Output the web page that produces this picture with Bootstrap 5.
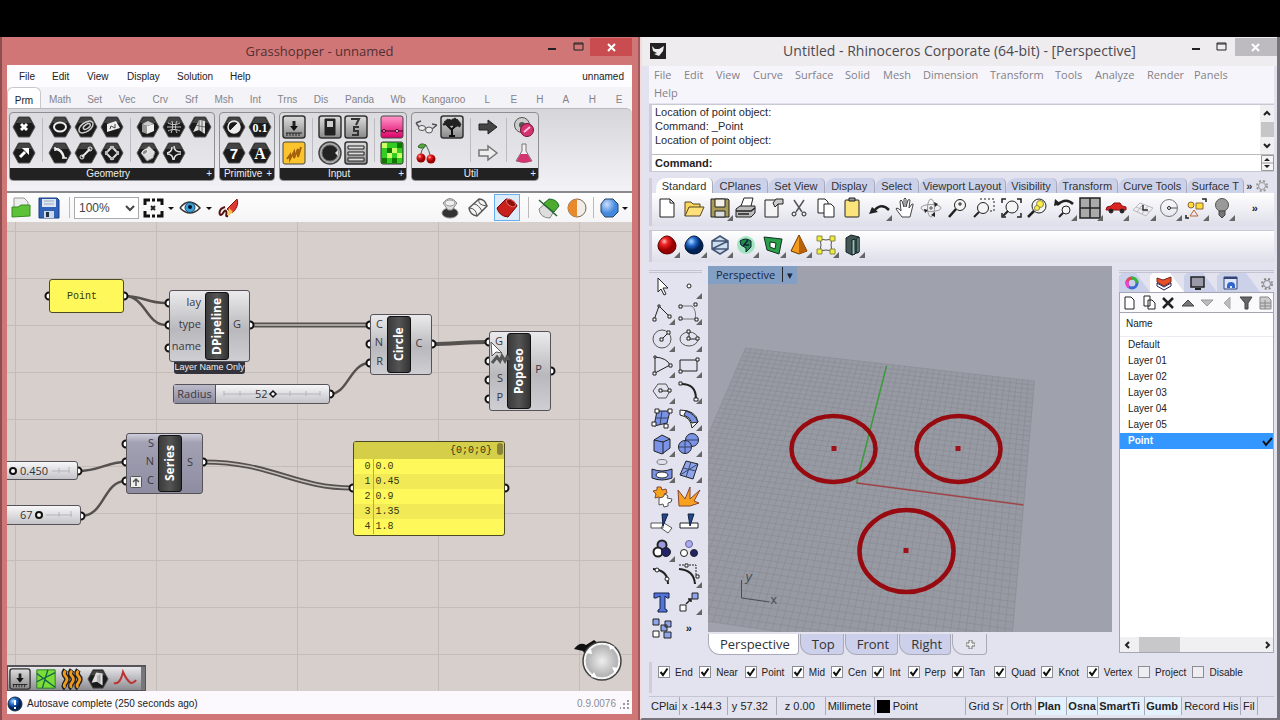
<!DOCTYPE html>
<html lang="en">
<head>
<meta charset="utf-8">
<meta name="viewport" content="width=device-width, initial-scale=1">
<title>Grasshopper and Rhinoceros</title>
<link href="https://cdn.jsdelivr.net/npm/bootstrap@5.3.0/dist/css/bootstrap.min.css" rel="stylesheet">
<style>
:root{--ui:"Liberation Sans",Arial,sans-serif;--segoe:"Open Sans","Noto Sans",sans-serif}
body{font-family:var(--ui);font-size:11px;line-height:14px;color:#222;background:#000}
button{border:0;padding:0;background:none;color:inherit;font:inherit}
a{color:inherit;text-decoration:none}
svg{display:block;fill:none;stroke:#222;flex:none}
.ico{width:24px;height:24px}
.desk{padding-top:37px}
.win-title{height:29px;font-family:var(--segoe);font-size:14px;line-height:28px}
.win-ctl{position:absolute;right:0;top:1px}
.win-ctl button{height:18px;width:26px}
.win-ctl .shut{width:42px}

/* Grasshopper */
.gh{background:#d17676;border-left:2px solid #8c4f50;border-right:2px solid #a05a5c;padding:0 6px 6px 5px}
.gh .win-title{color:#503033;height:28px;font-size:13px}
.gh .shut{background:#c94c50}
.gh-body{background:#f4f3f7}
.gh-menu{display:grid;grid-template-columns:33px 35px 40px 50px 53px 1fr auto;padding:0 8px 0 12px;height:22px;line-height:23px;background:#fdfcfe;font-size:10px}
.gh-tabs{display:grid;grid-template-columns:34fr 38fr 31fr 34fr 32fr 30fr 35fr 28fr 36fr 31fr 46fr 31fr 60fr 27fr 26fr 26fr 26fr 27fr 26fr;height:21px;line-height:25px;text-align:center;color:#85838a;font-size:10px}
.gh-tabs .on{background:#fff;color:#222;border:1px solid #c9c7cc;border-bottom:0;border-radius:6px 6px 0 0;line-height:19px}
.ribbon{height:83px;background:linear-gradient(#d6d5d9,#f3f2f6);border-top:1px solid #bbb9be;border-radius:0 6px 0 0;padding:3px 2px 0;gap:4px}
.rgroup{border:1px solid #8f8e92;border-radius:4px;height:69px;background:linear-gradient(#dcdbdf,#e9e8ec);overflow:hidden}
.rgroup .tools{padding:1px 1px 2px;height:55px}
.rcol{width:26px;display:grid;grid-auto-rows:26px;place-items:center}
.rsep{width:10px;display:flex;justify-content:center}
.rsep::before{content:"";width:1px;background:#bcbbc0;margin:4px 0}
.rgroup .cap{background:#222;color:#eee;height:13px;line-height:12px;font-size:10px;text-align:center;padding-right:2px}
.gh-bar{height:31px;border-top:2px solid #8a898e;background:linear-gradient(#fefefe,#f5f4f6);padding:0 4px 0 2px}
.gh-bar .vr{background:#bbb;opacity:1}
.zoomsel{width:65px;height:22px;border:1px solid #a9a8ad;background:#fff;font-size:12px;padding:0;color:#444;border-radius:0}
.picked{border:1px solid #6aaef0;background:#dcecfb;width:26px;height:27px}
.canvas{flex:1 1 469px;position:relative;overflow:hidden;background-color:#d7cfcb;background-image:linear-gradient(90deg,#c4bcb8 1px,transparent 1px),linear-gradient(#c4bcb8 1px,transparent 1px);background-size:141px 141px,47px 47px;background-position:8px 0,0 9px}
.wires{position:absolute;left:0;top:0}
.node{position:absolute;border:1px solid #55525a;border-radius:3px;background:linear-gradient(#ebeaec,#b9b8bc 55%,#cfced2);font-family:var(--segoe);font-size:11px;line-height:12px;color:#3a3842;display:flex}
.node .ins,.node .outs{display:flex;flex-direction:column;justify-content:space-around;flex:1;text-align:right;padding-bottom:4px}
.node .outs{text-align:center}
.node .narrow{flex:0 0 20px}
.spine{width:24px;margin:1px 0;border-radius:3px;border:1px solid #111;background:linear-gradient(90deg,#333,#555 50%,#3a3a3a);color:#fff;font-weight:700;font-size:12px;line-height:21px;writing-mode:vertical-rl;transform:rotate(180deg);text-align:center}
.note{position:absolute;border:1px solid #4b4a20;border-radius:3px;background:#fff85a;font-family:"Liberation Mono",monospace;font-size:10px;color:#333a10;overflow:hidden}
.track{background:linear-gradient(#f7f7f8,#c4c3c8);line-height:17px;align-items:center}
.n-point{left:42px;top:57px;width:75px;height:34px;line-height:34px;padding-left:17px}
.n-pipe{left:162px;top:68px;width:81px;height:72px}
.n-tag{left:167px;top:139px;width:71px;height:13px;background:#33323a;color:#eee;font-size:9px;line-height:12px;text-align:center;position:absolute;border-radius:0 0 3px 3px;white-space:nowrap}
.n-rad{left:166px;top:162px;width:157px;height:20px}
.n-rad b{font-weight:400;width:42px;height:100%;background:linear-gradient(#bdbccb,#8d8c9f);border-right:1px solid #55525a;text-align:center}
.n-circ{left:363px;top:92px;width:62px;height:61px}
.n-pop{left:482px;top:109px;width:62px;height:80px}
.n-pop .outs{flex:0 0 19px}
.n-ser{left:119px;top:211px;width:77px;height:61px;background:linear-gradient(#cfcedb,#a3a2b4 14%,#8d8ca1)}
.n-450{left:-4px;top:239px;width:75px;height:19px}
.n-67{left:-4px;top:283px;width:78px;height:20px}
.n-list{left:346px;top:219px;width:152px;height:95px}
.n-list table{width:100%;line-height:15px}
.n-list th,.n-list td{padding:0;font-weight:400;white-space:pre}
.n-list th{background:#d4ce48;height:17px;text-align:right}
.n-list th:last-child{padding-right:12px}
.n-list td:first-child{width:19px;text-align:right;border-right:1px solid #b5b03e;padding-right:2px}
.n-list td:last-child{padding-left:2px}
.n-list tr:nth-child(even) td{background:#f1e955}
.n-list .thumb{position:absolute;right:1px;top:1px;width:6px;height:12px;border-radius:3px;background:#88843a}
.cursor{position:absolute;left:482px;top:118px}
.opt{position:absolute;left:3px;top:42px}
.dock{position:absolute;left:0;bottom:0;width:139px;height:26px;border:1px solid #55545a;border-top-width:2px;background:linear-gradient(#e8e7ea,#8d8c91);padding-left:1px}
.dock .grab{width:6px;background:#77767b;height:100%;margin-left:4px}
.compass{position:absolute;right:8px;bottom:9px}
.gh-stat{height:23px;background:#fbf9fd;padding:2px 2px 0 0;font-size:10px}
.gh-stat .ver{color:#8d8b91}

/* Rhino */
.rh{background:#e3e3ef;border-left:2px solid #f0dcdc;border-right:3px solid #77747b;border-bottom:2px solid #77747b;padding:0 3px 4px 7px}
.rh .win-title{color:#4b494e;background:#efecf0;margin:0 -3px 0 -7px}
.rh .shut{background:#bdbbbf}
.rh .app{position:absolute;left:8px;top:6px}
.rh-menu{display:grid;grid-template-columns:30px 32px 37px 42px 50px 38px 40px 67px 65px 40px 52px 47px 1fr;grid-auto-rows:18px;line-height:18px;background:#f7f5fc;color:#838187;font-family:var(--segoe);font-size:11px;height:37px;padding-left:5px}
.grip{border-left:3px solid #cdcddb}
.cmd{margin-top:1px;height:68px;background:#fff;border-top:1px solid #c9c9d4;border-bottom:1px solid #c9c9d4}
.hist{height:49px;padding:0 3px;line-height:14px;color:#2b2930}
.prompt{border-top:1px solid #bbb;font-weight:700;padding-left:3px}
.prompt input{border:0;outline:0;min-width:0;font-weight:400;padding:0}
.sb-v{width:14px;background:#f0f0f3}
.sb-v i{background:#c6c6c9;flex:1;width:13px}
.rh-tabs{height:15px;margin-top:6px;display:grid;grid-template-columns:58fr 56fr 57fr 51fr 45fr 88fr 52fr 62fr 70fr 58fr 10fr 20fr;line-height:16px;color:#333;padding-left:4px;border-left:3px solid #cdcddb}
.rh-tabs button{background:#ccd1ea;border-radius:10px 5px 0 0;white-space:nowrap;overflow:hidden;border-right:1px solid #aab;text-align:center}
.rh-tabs .on{background:#fff}
.rh-tabs .more{background:none;border:0;font-weight:700}
.tb{display:grid;grid-template-columns:repeat(22,26fr) 38fr;background:linear-gradient(#fff,#dedeea);place-items:center;height:33px;padding:0 0 3px 2px}
.tb + .tb{height:32px;margin-top:4px;border-top:1px solid #c9c9d4}
.fly{position:relative}
.fly::after{content:"";position:absolute;right:-1px;bottom:-1px;border:3px solid transparent;border-right-color:#666;border-bottom-color:#666}
.box{width:53px;margin:4px 6px -9px 0;display:grid;grid-template-columns:1fr 1fr;grid-auto-rows:1fr;place-items:center;border-top:3px double #c3c3d2}
.view{background:#9fa1ac;min-height:366px;position:relative}
.view>svg{width:100%;height:100%;position:absolute}
.view .lbl{position:absolute;left:0;top:0;background:#83a0c4;height:18px;line-height:18px;font-family:var(--segoe);font-size:11px;color:#172541;padding:0 4px 0 8px;z-index:1}
.panel{width:155px;margin-left:7px;border-top:3px double #c3c3d2}
.ptabs{display:grid;grid-template-columns:31px 34px 33px 43px 1fr;height:19px}
.ptabs button{background:#ccd1ea;padding-left:5px;clip-path:polygon(0 3px,3px 0,calc(100% - 14px) 0,100% 100%,0 100%)}
.ptabs .on{background:#fff}
.ptabs .gear{background:none;padding:0;clip-path:none}
.ptools{display:flex;justify-content:space-between;align-items:center;background:#fafafd;border:1px solid #a5a5b3;height:21px;padding:0 1px}
.players{flex:1;background:#fff;border:1px solid #a5a5b3;border-top:0}
.players table{width:100%;font-size:10px}
.players th{font-weight:400;height:23px;border-bottom:1px solid #ececf2;padding:0 6px}
.players td{height:16px;padding:0 8px;line-height:16px}
.players .sel td{background:#3397ff;color:#fff;font-weight:700;padding-right:0}
.sb-h{height:15px;background:#f0f0f3}
.sb-h i{width:41px;background:#c8c8cb;height:15px;margin-left:5px}
.vtabs{height:23px;font-family:var(--segoe);font-size:13px;line-height:21px;margin:2px 0 0 59px;color:#333;gap:1px}
.vtabs button{background:#ccd0ea;border:1px solid #a9a9b8;border-top:0;border-radius:0 0 4px 12px;padding:0 8px 0 11px;height:21px}
.vtabs .on{background:#fff}
.vtabs .plus{background:none;padding:0 11px 0 13px}
.snaps{display:grid;grid-template-columns:41fr 45fr 47fr 39fr 41fr 35fr 44fr 42fr 47fr 45fr 51fr 54fr 81fr;margin-top:5px;height:31px;padding:4px 0 0 6px;font-size:10px}
.snaps label{display:flex;align-items:flex-start;gap:5px;white-space:nowrap;line-height:13px;height:13px}
.snaps input{appearance:none;margin:0;width:12px;height:12px;border:1px solid #8c8c95;background:#ededf2;flex:none}
.snaps input:checked{background:#fff url("data:image/svg+xml,%3Csvg xmlns='http://www.w3.org/2000/svg' viewBox='0 0 10 10'%3E%3Cpath d='M1.500 5l2.500 3L8.500 1.500' fill='none' stroke='%23111' stroke-width='2'/%3E%3C/svg%3E") center/10px}
.rstat{display:grid;grid-template-columns:31fr 48fr 49fr 49fr 49fr 92fr 42fr 28fr 31fr 31fr 47fr 37fr 59fr 17fr 16fr;margin-top:3px;border-top:1px solid #c5c5d3;height:18px;line-height:18px;font-size:11px}
.rstat>*{white-space:nowrap;border-right:1px solid #aaaabb;padding-left:2px;text-align:left;min-width:0}
.rstat>:last-child{border:0}
.rstat .act{background:#e3f1fc;font-weight:700;padding-left:1px}
.swatch{display:inline-block;width:13px;height:13px;background:#000;vertical-align:-3px;margin-right:3px}
</style>
</head>
<body>
<svg width="0" height="0" class="position-absolute" aria-hidden="true">
<defs>
<linearGradient id="gTile" x1="0" y1="0" x2="0" y2="1"><stop offset="0" stop-color="#ddd"/><stop offset="1" stop-color="#888"/></linearGradient>
<radialGradient id="gRed" cx=".35" cy=".3"><stop offset="0" stop-color="#fbb"/><stop offset=".4" stop-color="#e22"/><stop offset="1" stop-color="#900"/></radialGradient>
<radialGradient id="gBlue" cx=".35" cy=".3"><stop offset="0" stop-color="#adf"/><stop offset=".5" stop-color="#26c"/><stop offset="1" stop-color="#025"/></radialGradient>
<radialGradient id="gSky" cx=".35" cy=".3"><stop offset="0" stop-color="#cdf"/><stop offset="1" stop-color="#48d"/></radialGradient>
<radialGradient id="gGrey"><stop offset="0" stop-color="#eee"/><stop offset="1" stop-color="#b0b0b2"/></radialGradient>
<linearGradient id="gPink" x1="0" y1="0" x2="0" y2="1"><stop offset="0" stop-color="#f9c"/><stop offset="1" stop-color="#d06"/></linearGradient>
<symbol id="hex" viewBox="0 0 24 24"><path d="M6.500 2h11L23 12l-5.500 10h-11L1 12z" fill="#1b1b1b" stroke="#555"/><path d="M7 3h10l3 5H4z" fill="#444" stroke="none"/></symbol>
<symbol id="tile" viewBox="0 0 24 24"><rect x="1" y="1" width="22" height="22" rx="2.500" fill="url(#gTile)" stroke="#333" stroke-width="1.500"/></symbol>
</defs></svg>

<main class="desk d-flex min-vh-100">

<section class="gh w-50 d-flex flex-column" aria-label="Grasshopper">
<header class="win-title position-relative text-center">Grasshopper - unnamed
<div class="win-ctl d-flex">
<button aria-label="Minimise"><svg width="26" height="18" stroke-width="2"><path d="M10 11h8"/></svg></button>
<button aria-label="Maximise"><svg width="26" height="18"><path d="M10 5h9v7h-9z M10 6h9"/></svg></button>
<button class="shut" aria-label="Close"><svg width="42" height="18" stroke-width="2"><path d="M18 6l7 7M25 6l-7 7" stroke="#fff"/></svg></button>
</div></header>
<div class="gh-body flex-grow-1 d-flex flex-column">
<nav class="gh-menu"><a href="#">File</a><a href="#">Edit</a><a href="#">View</a><a href="#">Display</a><a href="#">Solution</a><a href="#">Help</a><span>unnamed</span></nav>
<div class="gh-tabs"><button class="on">Prm</button><button>Math</button><button>Set</button><button>Vec</button><button>Crv</button><button>Srf</button><button>Msh</button><button>Int</button><button>Trns</button><button>Dis</button><button>Panda</button><button>Wb</button><button>Kangaroo</button><button>L</button><button>E</button><button>H</button><button>A</button><button>H</button><button>E</button></div>

<div class="ribbon d-flex align-items-start">
<div class="rgroup"><div class="tools d-flex">
<div class="rcol">
<button aria-label="Point"><svg class="ico" viewBox="0 0 24 24"><use href="#hex"/><path d="M9 9l6 6M15 9l-6 6" stroke="#fff" stroke-width="3"/></svg></button>
<button aria-label="Vector"><svg class="ico" viewBox="0 0 24 24"><use href="#hex"/><path d="M8 16l5-5" stroke="#fff" stroke-width="3"/><path d="M10 7h7v7z" fill="#fff" stroke="none"/></svg></button></div>
<div class="rsep"></div>
<div class="rcol">
<button aria-label="Circle"><svg class="ico" viewBox="0 0 24 24"><use href="#hex"/><ellipse cx="12" cy="12" rx="6" ry="4.500" stroke="#eee" stroke-width="2"/></svg></button>
<button aria-label="Arc"><svg class="ico" viewBox="0 0 24 24"><use href="#hex"/><path d="M7 8q7 0 9 9" stroke="#eee" stroke-width="2.500"/><path d="M7 6v4M14 17h5" stroke="#eee" stroke-width="1.500"/></svg></button></div>
<div class="rcol">
<button aria-label="Curve"><svg class="ico" viewBox="0 0 24 24"><use href="#hex"/><g transform="rotate(-35 12 12)" stroke="#ccc"><ellipse cx="12" cy="12" rx="8" ry="4.500" stroke-width="1.500"/><ellipse cx="13" cy="12" rx="4" ry="2" stroke-width="1.500"/></g></svg></button>
<button aria-label="Line"><svg class="ico" viewBox="0 0 24 24"><use href="#hex"/><path d="M8 16l8-8" stroke="#eee" stroke-width="2"/><circle cx="8" cy="16" r="2" stroke="#eee"/><circle cx="16" cy="8" r="2" stroke="#eee"/></svg></button></div>
<div class="rcol">
<button aria-label="Plane"><svg class="ico" viewBox="0 0 24 24"><use href="#hex"/><path d="M7 9l9-3 4 7-13 4z" fill="#eee" stroke="none"/><path d="M10 14l1-3 4 2 0-4" stroke="#444"/></svg></button>
<button aria-label="Rectangle"><svg class="ico" viewBox="0 0 24 24"><use href="#hex"/><path d="M12 6l6 6-6 6-6-6z" stroke="#ddd" stroke-width="2"/><path d="M10 5h4v3h-4zM10 16h4v3h-4zM5 10h3v4H5zM16 10h3v4h-3z" fill="#bbb" stroke="none"/></svg></button></div>
<div class="rsep"></div>
<div class="rcol">
<button aria-label="Box"><svg class="ico" viewBox="0 0 24 24"><use href="#hex"/><path d="M6 9l5 2v8l-5-2z" fill="#999" stroke="none"/><path d="M11 11l7-2v7l-7 3z" fill="#eee" stroke="none"/><path d="M6 9l6-3 6 3-7 2z" fill="#ccc" stroke="none"/></svg></button>
<button aria-label="Brep"><svg class="ico" viewBox="0 0 24 24"><use href="#hex"/><path d="M5 12l8-7 6 6-2 6-6 3z" fill="#ddd" stroke="#888"/><ellipse cx="9" cy="11" rx="3" ry="2" transform="rotate(-35 9 11)" fill="#888" stroke="#eee"/></svg></button></div>
<div class="rcol">
<button aria-label="Mesh"><svg class="ico" viewBox="0 0 24 24"><use href="#hex"/><path d="M5 12h14M6 8c4 2 8 2 12 0M6 16c4-2 8-2 12 0M10 6c1 4 1 8-1 12M15 6c-2 4-2 8 0 12" stroke="#ccc"/></svg></button>
<button aria-label="Twisted box"><svg class="ico" viewBox="0 0 24 24"><use href="#hex"/><path d="M12 5q0 6 7 6M19 13q-7 0-7 6M5 12q5-1 5-6M5 13q6 0 6 6" stroke="#ddd" stroke-width="1.500"/></svg></button></div>
<div class="rcol">
<button aria-label="Geometry"><svg class="ico" viewBox="0 0 24 24"><use href="#hex"/><path d="M11 5l6 1v13l-6-4-6 2z" fill="#ddd" stroke="none"/><path d="M11 5v10M8 10l3 1M17 12l-6-1M14 6v11" stroke="#666"/></svg></button></div>
</div><div class="cap d-flex"><span class="flex-grow-1">Geometry</span><span>+</span></div></div>

<div class="rgroup"><div class="tools d-flex">
<div class="rcol">
<button aria-label="Boolean"><svg class="ico" viewBox="0 0 24 24"><use href="#hex"/><circle cx="12" cy="12" r="6" stroke="#eee" stroke-width="1.500"/><path d="M16 8a5.500 5.500 0 0 1-8 8z" fill="#eee" stroke="#eee"/></svg></button>
<button aria-label="Integer"><svg class="ico" viewBox="0 0 24 24"><use href="#hex"/><text x="12" y="17.500" text-anchor="middle" font-size="15" font-weight="700" fill="#fff" stroke="none">7</text></svg></button></div>
<div class="rcol">
<button aria-label="Number"><svg class="ico" viewBox="0 0 24 24"><use href="#hex"/><text x="12" y="16.500" text-anchor="middle" font-size="12" font-weight="700" font-family="Liberation Serif" fill="#fff" stroke="none">0.1</text></svg></button>
<button aria-label="Text"><svg class="ico" viewBox="0 0 24 24"><use href="#hex"/><text x="12" y="17.500" text-anchor="middle" font-size="16" font-weight="700" font-family="Liberation Serif" fill="#fff" stroke="none">A</text></svg></button></div>
</div><div class="cap d-flex"><span class="flex-grow-1">Primitive</span><span>+</span></div></div>

<div class="rgroup"><div class="tools d-flex">
<div class="rcol">
<button aria-label="Number slider"><svg class="ico" viewBox="0 0 24 24"><use href="#tile"/><path d="M12 6v6" stroke-width="3"/><path d="M8 11h8l-4 5z" fill="#111" stroke="none"/><path d="M4 18h16M5 18v3M8 18v3M11 18v3M14 18v3M17 18v3"/></svg></button>
<button aria-label="Panel"><svg class="ico" viewBox="0 0 24 24"><rect x="1" y="1" width="22" height="22" rx="2" fill="#fcc42c" stroke="#444"/><path d="M5 18l3-4 0 4 4-7v6l4-9 0 8 3-10" stroke="#a4620a" stroke-width="2"/></svg></button></div>
<div class="rsep"></div>
<div class="rcol">
<button aria-label="Toggle"><svg class="ico" viewBox="0 0 24 24"><use href="#tile"/><path d="M7 4h10v16H7z" fill="#222"/><path d="M9 6h6v6H9z" fill="#ccc" stroke="none"/></svg></button>
<button aria-label="Knob"><svg class="ico" viewBox="0 0 24 24"><circle cx="12" cy="12" r="11" fill="#aaa" stroke="#444" stroke-width="1.500"/><circle cx="12" cy="12" r="8" fill="#222" stroke="#666"/><path d="M20 9v6l-3-3z" fill="#ddd" stroke="none"/></svg></button></div>
<div class="rcol">
<button aria-label="Digit scroller"><svg class="ico" viewBox="0 0 24 24"><use href="#tile"/><path d="M7 4h8l-3 6M15 12h-5v4h4v4H8" stroke="#333" stroke-width="2"/></svg></button>
<button aria-label="Value list"><svg class="ico" viewBox="0 0 24 24"><use href="#tile"/><path d="M4 5h16v3H4zM4 11h16v3H4zM4 17h16v3H4z" fill="#ddd"/></svg></button></div>
<div class="rsep"></div>
<div class="rcol">
<button aria-label="Gradient"><svg class="ico" viewBox="0 0 24 24"><rect x="1" y="1" width="22" height="22" rx="2" fill="url(#gPink)" stroke="#444"/><path d="M1 16h22" stroke="#402"/><circle cx="4" cy="16" r="1.500" fill="#f9c" stroke="#402"/><circle cx="17" cy="16" r="1.500" fill="#fff" stroke="#402"/></svg></button>
<button aria-label="Image sampler"><svg class="ico" viewBox="0 0 24 24"><rect x="1" y="1" width="22" height="22" rx="2" fill="#3c2" stroke="#333"/><path d="M2 2h5v5H2zM12 7h5v5h-5zM7 12h5v5H7zM17 12h5v5h-5z" fill="#cf6" stroke="none"/><path d="M7 7h5v5H7zM17 2h5v5h-5zM12 17h5v5h-5zM2 17h5v5H2z" fill="#170" stroke="none"/></svg></button></div>
</div><div class="cap d-flex"><span class="flex-grow-1">Input</span><span>+</span></div></div>

<div class="rgroup"><div class="tools d-flex">
<div class="rcol">
<button aria-label="Glasses"><svg class="ico" viewBox="0 0 24 24"><path d="M2 8l3 4M2 8l5-2M11 13l1 0M18 14l5-4M23 10l-5-1" stroke="#555" stroke-width="1.500"/><ellipse cx="8" cy="13" rx="3.500" ry="2.500" fill="#eee" stroke="#555"/><ellipse cx="15" cy="15" rx="3.500" ry="3" fill="#eee" stroke="#555"/></svg></button>
<button aria-label="Cherry picker"><svg class="ico" viewBox="0 0 24 24"><path d="M12 4q-5 4-6 12M12 4q3 5 5 13" stroke="#465"/><path d="M12 4Q6 1 4 6q5 3 8-2" fill="#5a3" stroke="#363"/><circle cx="7" cy="17" r="4.500" fill="url(#gRed)" stroke="none"/><circle cx="17" cy="18" r="4.500" fill="url(#gRed)" stroke="none"/></svg></button></div>
<div class="rcol">
<button aria-label="Data tree"><svg class="ico" viewBox="0 0 24 24"><use href="#tile"/><path d="M12 22v-9M12 15L6 9M12 14l6-5M9 21h6" stroke="#111" stroke-width="2"/><path d="M3 10l2-4 3-2 3 1 4-2 3 2 3 4-1 3-3-1-3 1-2-2-3 2-3-2z" fill="#222" stroke="#222" stroke-dasharray="2 1"/></svg></button></div>
<div class="rsep"></div>
<div class="rcol">
<button aria-label="Jump in"><svg class="ico" viewBox="0 0 24 24"><path d="M3 9h9V5l9 7-9 7v-4H3z" fill="#444" stroke="#222"/></svg></button>
<button aria-label="Jump out"><svg class="ico" viewBox="0 0 24 24"><path d="M3 9h9V5l9 7-9 7v-4H3z" fill="#eee" stroke="#777" stroke-width="1.500"/></svg></button></div>
<div class="rsep"></div>
<div class="rcol">
<button aria-label="Cluster"><svg class="ico" viewBox="0 0 24 24"><circle cx="10" cy="10" r="7.500" fill="#ccc" stroke="#555"/><circle cx="10" cy="10" r="3" fill="#555" stroke="none"/><circle cx="15" cy="15" r="6.500" fill="#d3336e" stroke="#713"/><path d="M12 17l6-5" stroke="#fbd" stroke-width="2"/></svg></button>
<button aria-label="Galapagos"><svg class="ico" viewBox="0 0 24 24"><path d="M10 3h4v7l6 10q-8 3-16 0l6-10z" fill="#f4eef2" stroke="#777"/><path d="M8.500 13h7l4 7q-7 3-15 0z" fill="#d3336e" stroke="none"/></svg></button></div>
</div><div class="cap d-flex"><span class="flex-grow-1">Util</span><span>+</span></div></div>
</div>

<div class="gh-bar d-flex align-items-center">
<button aria-label="Open"><svg class="ico" viewBox="0 0 24 24"><path d="M5 2h10l4 4v12H5z" fill="#eee" stroke="#999"/><path d="M3 21V11h6l3-2h9v11z" fill="#5ec238" stroke="#3a8a22"/></svg></button>
<button class="ms-1" aria-label="Save"><svg class="ico" viewBox="0 0 24 24"><path d="M2 2h18l2 2v18H2z" fill="#2f62b8" stroke="#1c4080"/><path d="M5 3h14v8H5z" fill="#dde6f2" stroke="none"/><path d="M7 5h10M7 8h10" stroke="#9ab"/><path d="M7 15h10v7H7z" fill="#cdd8e8" stroke="none"/><path d="M9 16h3v5H9z" fill="#234" stroke="none"/></svg></button>
<span class="vr ms-2 my-1"></span>
<select class="zoomsel ms-1" aria-label="Zoom"><option>100%</option></select>
<button class="ms-1" aria-label="Zoom extents"><svg width="32" height="24" viewBox="0 0 32 24"><path d="M2 9V4h5M14 4h5v5M19 15v5h-5M7 20H2v-5M9 4h3M9 20h3" stroke="#111" stroke-width="3"/><path d="M8 10l4 4M12 10l-4 4" stroke-width="2"/><path d="M25 11h6l-3 3z" fill="#111" stroke="none"/></svg></button>
<button class="ms-1" aria-label="Named views"><svg width="34" height="24" viewBox="0 0 34 24"><path d="M1 12q9-12 20 0-10 10-20 0" fill="#fff" stroke="#333" stroke-width="1.500"/><circle cx="11" cy="11.500" r="5" fill="#3aa0d8" stroke="#246"/><circle cx="11" cy="11" r="2" fill="#012" stroke="none"/><path d="M27 11h6l-3 3z" fill="#111" stroke="none"/></svg></button>
<button class="ms-1" aria-label="Sketch"><svg class="ico" viewBox="0 0 24 24"><path d="M20 3c2 5-1 11-5 14l-5-4z" fill="#e03a34" stroke="#811"/><path d="M12 12l4 4-5 4z" fill="#f5c13c" stroke="none"/><path d="M8 11c-7 2-6 8-4 8s3-6 5-4-2 6 2 5" stroke="#511" stroke-width="2"/></svg></button>
<span class="flex-grow-1"></span>
<button aria-label="No preview"><svg class="ico" viewBox="0 0 24 24"><ellipse cx="12" cy="17" rx="8" ry="5" fill="#333" stroke="#888"/><path d="M5 7q7-9 14 0l-5 7h-4z" fill="#ddd" stroke="#888"/><ellipse cx="12" cy="7" rx="5" ry="3" fill="#eee" stroke="#999"/></svg></button>
<button class="ms-1" aria-label="Wireframe preview"><svg class="ico" viewBox="0 0 24 24"><path d="M3 12L13 3q6 0 8 7L11 20q-7-1-8-8z" fill="#f4f4f4" stroke="#555" stroke-width="1.500"/><path d="M13 3q-2 6 8 7M3 12q7 0 8 8M8 8q4 0 8 7" stroke="#555"/></svg></button>
<button class="picked ms-1" aria-label="Shaded preview" aria-pressed="true"><svg class="ico" viewBox="0 0 24 24"><path d="M2 12L11 3q8 0 11 7l-9 11q-9-1-11-9z" fill="#c8201a" stroke="#700"/><ellipse cx="16" cy="7" rx="5" ry="3" transform="rotate(35 16 7)" fill="#8c0f0c" stroke="#e66"/></svg></button>
<span class="vr mx-2 my-1"></span>
<button aria-label="Preview selected"><svg class="ico" viewBox="0 0 24 24"><path d="M2 13l8-7 7 9-4 7q-10 0-11-9" fill="#ddd" stroke="#888"/><path d="M6 8l6-5q8 0 10 7l-5 6z" fill="#4caa2c" stroke="#263"/><path d="M2 4l18 16" stroke="#263" stroke-width="1.500"/></svg></button>
<button class="ms-1" aria-label="Document preview"><svg class="ico" viewBox="0 0 24 24"><circle cx="12" cy="12" r="9" fill="#f0ede8" stroke="#765"/><path d="M12 3a9 9 0 0 0 0 18z" fill="#e8892c" stroke="none"/></svg></button>
<span class="vr ms-1 my-1"></span>
<button class="ms-1" aria-label="Preview mesh"><svg width="30" height="24" viewBox="0 0 30 24"><path d="M7 3h8l5 5v8l-5 5H7l-4-5V8z" fill="url(#gSky)" stroke="#246"/><path d="M24 11h6l-3 3z" fill="#111" stroke="none"/></svg></button>
</div>

<div class="canvas">
<svg class="wires" width="624" height="470">
<g stroke="#55514f" stroke-width="2.500">
<path d="M117 74c20 0 22 7 42 7M117 74c22 0 22 29 42 29"/>
<path d="M323 172c18 0 20-31 40-31"/><path d="M71 249c22 0 28-9 48-9M74 294c24 0 22-35 45-35"/>
<path d="M425 122c20 0 35-2 57-2" stroke-width="4"/>
<path d="M243 103h120M196 240c70 0 90 26 150 26" stroke-width="5"/>
</g>
<path d="M243 103h120M196 240c70 0 90 26 150 26" stroke="#c5bebb" stroke-width="1.500"/>
<g fill="#fff" stroke="#111" stroke-width="2">
<circle cx="42" cy="74" r="3.500"/><circle cx="117" cy="74" r="3.500"/><circle cx="162" cy="81" r="3.500"/><circle cx="162" cy="103" r="3.500"/><circle cx="162" cy="126" r="3.500"/><circle cx="243" cy="103" r="3.500"/><circle cx="363" cy="103" r="3.500"/><circle cx="363" cy="122" r="3.500"/><circle cx="363" cy="141" r="3.500"/><circle cx="425" cy="122" r="3.500"/><circle cx="323" cy="172" r="3.500"/><circle cx="482" cy="120" r="3.500"/><circle cx="482" cy="139" r="3.500"/><circle cx="482" cy="158" r="3.500"/><circle cx="482" cy="177" r="3.500"/><circle cx="544" cy="149" r="3.500"/><circle cx="119" cy="222" r="3.500"/><circle cx="119" cy="240" r="3.500"/><circle cx="119" cy="259" r="3.500"/><circle cx="196" cy="240" r="3.500"/><circle cx="71" cy="249" r="3.500"/><circle cx="74" cy="294" r="3.500"/><circle cx="346" cy="266" r="3.500"/><circle cx="498" cy="266" r="3.500"/>
</g></svg>
<div class="note n-point">Point</div>
<div class="n-tag">Layer Name Only</div>
<div class="node n-pipe"><div class="ins pe-1"><span>lay</span><span>type</span><span>name</span></div><div class="spine">DPipeline</div><div class="outs narrow pe-1"><span>G</span></div></div>
<div class="node track n-rad"><b>Radius</b><svg width="112" height="18"><path d="M8 9h96M8 6v5M24 6v5M74 6v5M90 6v5M104 6v5" stroke="#b5b4ba"/><text x="39" y="13" fill="#333" stroke="none">52</text><path d="M57 6l3 3-3 3-3-3z" fill="#fff" stroke="#111" stroke-width="1.500"/></svg></div>
<div class="node n-circ"><div class="ins pe-1"><span>C</span><span>N</span><span>R</span></div><div class="spine">Circle</div><div class="outs narrow pe-1"><span>C</span></div></div>
<div class="node n-pop"><div class="ins pe-1"><span>G</span><span>&nbsp;</span><span>S</span><span>P</span></div><div class="spine">PopGeo</div><div class="outs pe-1"><span>P</span></div></div>
<svg class="cursor" width="24" height="28" aria-hidden="true"><path d="M2 2l1 14 4-4 6 1z" fill="#fff" stroke="#555"/><path d="M3 23l5-6 3 4 2-5 3 5 2-4 2 3" stroke="#555" stroke-width="3"/></svg>
<div class="node n-ser"><div class="ins pe-1"><span>S</span><span>N</span><span>C</span></div><div class="spine">Series</div><div class="outs narrow pe-1"><span>S</span></div>
<svg class="opt" width="12" height="12"><rect x=".5" y=".5" width="11" height="11" rx="1" fill="#eee" stroke="#555"/><path d="M6 10V4M3 6l3-3 3 3" stroke="#555" stroke-width="1.500"/></svg></div>
<div class="node track n-450"><svg width="74" height="17"><path d="M48 9h18M55 6v5M65 5v6" stroke="#b5b4ba"/><circle cx="9" cy="9" r="3" fill="#fff" stroke="#111" stroke-width="2"/><text x="16" y="13" fill="#333" stroke="none">0.450</text></svg></div>
<div class="node track n-67"><svg width="76" height="18"><path d="M42 9h26M55 6v5M67 5v6" stroke="#b5b4ba"/><text x="16" y="13" fill="#333" stroke="none">67</text><circle cx="35" cy="9" r="3" fill="#fff" stroke="#111" stroke-width="2"/></svg></div>
<div class="note n-list"><table><thead><tr><th></th><th>{0;0;0}</th></tr></thead><tbody><tr><td>0</td><td>0.0</td></tr><tr><td>1</td><td>0.45</td></tr><tr><td>2</td><td>0.9</td></tr><tr><td>3</td><td>1.35</td></tr><tr><td>4</td><td>1.8</td></tr></tbody></table><span class="thumb"></span></div>

<div class="dock d-flex align-items-center gap-1">
<button aria-label="Slider"><svg width="22" height="22" viewBox="0 0 24 24"><use href="#tile"/><path d="M12 6v6" stroke-width="3"/><path d="M8 11h8l-4 5z" fill="#111" stroke="none"/><path d="M4 18h16M5 18v3M8 18v3M11 18v3M14 18v3M17 18v3"/></svg></button>
<button aria-label="Graph mapper"><svg width="22" height="22" viewBox="0 0 24 24"><path d="M2 2h20v20H2z" fill="#7ddc3a" stroke="#272"/><path d="M2 15L22 5M14 2L8 22M2 6l8 6M11 13l11 8" stroke="#164" stroke-width="1.500"/></svg></button>
<button aria-label="Flow"><svg width="22" height="22" viewBox="0 0 24 24"><path d="M5 2q-3 4 0 7t0 7 0 6M12 2q-3 4 0 7t0 7 0 6M19 2q-3 4 0 7t0 7 0 6" stroke="#222" stroke-width="6"/><path d="M5 3q-3 3 0 6t0 7 0 5M12 3q-3 3 0 6t0 7 0 5M19 3q-3 3 0 6t0 7 0 5" stroke="#f39a1c" stroke-width="3"/></svg></button>
<button aria-label="Geometry"><svg width="22" height="22" viewBox="0 0 24 24"><use href="#hex"/><path d="M10 5l7 1v13l-6-4-6 1z" fill="#ddd" stroke="none"/><path d="M12 8v7M14 7v9" stroke="#888"/></svg></button>
<button aria-label="Quick graph"><svg width="24" height="22" viewBox="0 0 24 22"><path d="M1 15q6 2 9-11 4 9 8 11 3 0 5-3" stroke="#b33" stroke-width="2"/></svg></button>
<span class="grab ms-auto"></span></div>
<svg class="compass" width="52" height="46"><path d="M2 13q6-8 12-4l8-5 4 3-12 14-3-6z" fill="#111" stroke="none"/><circle cx="30" cy="25" r="19" fill="#f6f6f6" stroke="#444" stroke-width="1.500"/><circle cx="30" cy="25" r="16" fill="url(#gGrey)" stroke="#bbb"/><path d="M14 17l5-4 1 5zM37 8l6 3-5 3zM46 32l-6-1 3 7zM19 41l3-5 3 6z" fill="#fff" stroke="none"/></svg>
</div>
<footer class="gh-stat d-flex align-items-center"><svg width="16" height="16" viewBox="0 0 16 16" class="me-1"><circle cx="8" cy="8" r="7" fill="url(#gBlue)" stroke="#134"/><path d="M8 4v5M8 11v2" stroke="#fff" stroke-width="2"/></svg><span class="flex-grow-1">Autosave complete (250 seconds ago)</span><span class="ver me-1">0.9.0076</span><svg width="10" height="10"><path d="M8 1v2M4 4v2M8 4v2M0 8v2M4 8v2M8 8v2" stroke="#999" stroke-width="2"/></svg></footer>
</div>
</section>

<section class="rh w-50 d-flex flex-column" aria-label="Rhinoceros">
<header class="win-title position-relative text-center">
<svg class="app" width="16" height="16"><path d="M0 0h16v16H0z" fill="#222" stroke="none"/><path d="M2 3l3 3 4 0 5-3-1 5-4 5-5-2 3-1-4-2z" fill="#eee" stroke="none"/></svg>
Untitled - Rhinoceros Corporate (64-bit) - [Perspective]
<div class="win-ctl d-flex">
<button aria-label="Minimise"><svg width="26" height="18" stroke-width="2"><path d="M9 11h8"/></svg></button>
<button aria-label="Maximise"><svg width="26" height="18"><path d="M8 5h9v7H8z M8 6h9"/></svg></button>
<button class="shut" aria-label="Close"><svg width="42" height="18" stroke-width="2"><path d="M17 6l7 7M24 6l-7 7" stroke="#fff"/></svg></button>
</div></header>
<nav class="rh-menu"><a href="#">File</a><a href="#">Edit</a><a href="#">View</a><a href="#">Curve</a><a href="#">Surface</a><a href="#">Solid</a><a href="#">Mesh</a><a href="#">Dimension</a><a href="#">Transform</a><a href="#">Tools</a><a href="#">Analyze</a><a href="#">Render</a><a href="#">Panels</a><a href="#">Help</a></nav>

<div class="cmd grip d-flex flex-column">
<div class="d-flex"><div class="hist flex-grow-1">Location of point object:<br>Command: _Point<br>Location of point object:</div>
<div class="sb-v d-flex flex-column align-items-center"><svg width="12" height="17"><path d="M3 10l3-3 3 3" stroke-width="2"/></svg><i></i><svg width="12" height="17"><path d="M3 7l3 3 3-3" stroke-width="2"/></svg></div></div>
<label class="prompt d-flex flex-grow-1 align-items-center">Command:<input class="flex-grow-1" aria-label="Command"><svg width="13" height="16"><path d="M.5.500h12v15H.5zM.5 8h12" fill="#f4f4f4" stroke="#999"/><path d="M3 6h6L6 3zM3 10h6l-3 3z" fill="#222" stroke="none"/></svg></label>
</div>

<div class="rh-tabs"><button class="on">Standard</button><button>CPlanes</button><button>Set View</button><button>Display</button><button>Select</button><button>Viewport Layout</button><button>Visibility</button><button>Transform</button><button>Curve Tools</button><button>Surface T</button><button class="more">»</button><button class="more" aria-label="Options"><svg width="16" height="14"><circle cx="8" cy="7" r="5" stroke="#999" stroke-width="2" stroke-dasharray="2 2"/><circle cx="8" cy="7" r="3.500" stroke="#999"/></svg></button></div>
<div class="tb grip">
<button aria-label="New"><svg class="ico" viewBox="0 0 24 24"><path d="M5 3h10l4 4v14H5z" fill="#fff"/><path d="M15 3v4h4"/></svg></button>
<button aria-label="Open"><svg class="ico" viewBox="0 0 24 24"><path d="M3 20V6h6l2 2h7v3" fill="#fbd85a" stroke="#542"/><path d="M3 20l4-9h15l-4 9z" fill="#fde07a" stroke="#542"/></svg></button>
<button class="fly" aria-label="Save"><svg class="ico" viewBox="0 0 24 24"><path d="M3 3h17l1 1v17H3z" fill="#a89c58"/><path d="M7 3h10v8H7z" fill="#f3f1e8"/><path d="M7 15h10v6H7z" fill="#ddd"/></svg></button>
<button aria-label="Print"><svg class="ico" viewBox="0 0 24 24"><path d="M7 10l3-8h9l-2 8" fill="#fff"/><path d="M2 13l4-3h15v7l-4 4H2z" fill="#bbb"/><path d="M2 15h15l4-3M4 18h11" stroke-width="1.500"/></svg></button>
<button aria-label="Properties"><svg class="ico" viewBox="0 0 24 24"><path d="M4 4h13v17H4z" fill="#f4f4f4"/><path d="M12 7l3-4h7v5h-5l-3 3z" fill="#ccc"/></svg></button>
<button aria-label="Cut"><svg class="ico" viewBox="0 0 24 24"><path d="M7 4l8 12M17 4L9 16" stroke-width="1.500" stroke="#555"/><circle cx="7" cy="18" r="2"/><circle cx="17" cy="18" r="2"/></svg></button>
<button aria-label="Copy"><svg class="ico" viewBox="0 0 24 24"><path d="M4 3h7l3 3v11H4z" fill="#fff"/><path d="M10 8h7l3 3v10H10z" fill="#fff"/></svg></button>
<button aria-label="Paste"><svg class="ico" viewBox="0 0 24 24"><rect x="5" y="4" width="14" height="17" rx="1" fill="#fbe47c"/><path d="M9 2h6v3H9z" fill="#999"/></svg></button>
<button class="fly" aria-label="Undo"><svg class="ico" viewBox="0 0 24 24"><path d="M7 15Q14 6 22 14" stroke-width="2.500"/><path d="M2 18l3-7 6 5z" fill="#222" stroke="none"/></svg></button>
<button aria-label="Pan"><svg class="ico" viewBox="0 0 24 24"><path d="M9 21l-6-8q0-2 3 0l2 2-1-10q1-2 2 0l2 6V3q1-2 2 0v8l2-7q2-1 2 0l-1 8 3-4q2 0 1 1l-3 12z" fill="#fff" stroke="#444"/></svg></button>
<button aria-label="Rotate view"><svg class="ico" viewBox="0 0 24 24"><ellipse cx="12" cy="12" rx="10" ry="3.500" stroke="#999"/><ellipse cx="12" cy="12" rx="3.500" ry="9" stroke="#999"/><path d="M10 12h4M12 10v4" stroke="#555"/><path d="M15 6l4 2-3 3zM12 19l4-3v5zM5 13l4 1-3 3z" fill="#222" stroke="none"/></svg></button>
<button aria-label="Zoom"><svg class="ico" viewBox="0 0 24 24"><circle cx="14" cy="9" r="5.500" fill="#f4f4f4"/><path d="M10 13l-7 8" stroke-width="2.500"/><path d="M12 8h4M14 6v4"/></svg></button>
<button aria-label="Zoom window"><svg class="ico" viewBox="0 0 24 24"><path d="M8 3h14v12h-5" stroke-dasharray="2 2"/><circle cx="11" cy="12" r="5.500" fill="#f4f4f4"/><path d="M7 16l-5 5" stroke-width="2"/></svg></button>
<button aria-label="Zoom extents"><svg class="ico" viewBox="0 0 24 24"><circle cx="13" cy="11" r="6" fill="#f4f4f4"/><path d="M9 15l-5 5" stroke-width="2"/><path d="M3 7V3h4M18 3h4v4M22 17v4h-4M7 21H3v-4" stroke-width="1.500"/></svg></button>
<button aria-label="Zoom selected"><svg class="ico" viewBox="0 0 24 24"><circle cx="14" cy="10" r="7" fill="#f4f4f4"/><circle cx="15" cy="8" r="3.500" fill="#fe4" stroke="#885"/><circle cx="12" cy="12" r="2.500" fill="#fe4" stroke="#885"/><path d="M9 15l-6 6" stroke-width="2.500"/></svg></button>
<button class="fly" aria-label="Undo view"><svg class="ico" viewBox="0 0 24 24"><path d="M5 9Q14 1 21 8" stroke-width="2.500"/><path d="M2 10l1-7 6 5z" fill="#222" stroke="none"/><circle cx="14" cy="14" r="4" fill="#f4f4f4"/><path d="M11 17l-4 4" stroke-width="2"/></svg></button>
<button class="fly" aria-label="Four viewports"><svg class="ico" viewBox="0 0 24 24"><path d="M2 2h20v20H2zM12 2v20M2 12h20" fill="#aaa" stroke-width="1.500"/></svg></button>
<button class="fly" aria-label="Car"><svg class="ico" viewBox="0 0 24 24"><path d="M2 14l1-3 4-1 3-3h6l2 3 4 1v3z" fill="#d22" stroke="#811"/><circle cx="7" cy="15" r="2" fill="#222"/><circle cx="18" cy="15" r="2" fill="#222"/></svg></button>
<button class="fly" aria-label="CPlane"><svg class="ico" viewBox="0 0 24 24"><path d="M2 14l7-7 13 5-7 8zM5 11l13 5M12 8l-6 8M17 10l-6 8" stroke="#bbb"/><path d="M12 9v5h5" stroke="#333" stroke-width="1.500"/></svg></button>
<button class="fly" aria-label="Circle"><svg class="ico" viewBox="0 0 24 24"><circle cx="12" cy="12" r="8.500" stroke="#777"/><path d="M12 12h8" stroke="#555"/><circle cx="12" cy="12" r="1.500" fill="#fff"/></svg></button>
<button class="fly" aria-label="Select"><svg class="ico" viewBox="0 0 24 24"><circle cx="7" cy="9" r="3" fill="#fd3" stroke="#864"/><path d="M12 7h7v6h-7z" fill="#fd3" stroke="#864"/><path d="M6 20l4-6 4 6z" stroke="#b63"/><path d="M18 3h4v3M2 19v3h3" stroke-width="1.500"/></svg></button>
<button class="fly" aria-label="Lights"><svg class="ico" viewBox="0 0 24 24"><circle cx="12" cy="9" r="6.500" fill="#999" stroke="#555"/><path d="M9 15h6v4l-3 3-3-3z" fill="#777" stroke="#444"/></svg></button>
<button class="fw-bold" aria-label="More">»</button>
</div>
<div class="tb grip">
<button class="fly" aria-label="Red paint"><svg class="ico" viewBox="0 0 24 24"><path d="M12 3c4 0 9 5 9 10a9 8 0 0 1-18 0c0-5 5-10 9-10" fill="url(#gRed)" stroke="#500"/></svg></button>
<button class="fly" aria-label="Blue paint"><svg class="ico" viewBox="0 0 24 24"><path d="M12 3c4 0 9 5 9 10a9 8 0 0 1-18 0c0-5 5-10 9-10" fill="url(#gBlue)" stroke="#013"/></svg></button>
<button class="fly" aria-label="Mesh"><svg class="ico" viewBox="0 0 24 24"><path d="M12 3l8 5v8l-8 5-8-5V8zM20 8L4 16M4 8h16M4 16h16" fill="#cde" stroke="#457" stroke-width="1.500"/></svg></button>
<button class="fly" aria-label="Glow"><svg class="ico" viewBox="0 0 24 24"><circle cx="12" cy="12" r="9" fill="#6fdca0" opacity=".6" stroke="none"/><path d="M6 8q6-4 11 0v6l-5 5v-4l-5-3z" fill="#1f8a4c" stroke="#123"/><path d="M14 7l-4 5h5" stroke="#123" stroke-width="1.500"/></svg></button>
<button class="fly" aria-label="Green frame"><svg class="ico" viewBox="0 0 24 24"><path d="M3 4l18 2-3 15-12-4z" fill="#2aa04a" stroke="#132"/><path d="M9 9l6 1-1 6-5-2z" fill="#fff" stroke="#132"/></svg></button>
<button class="fly" aria-label="Cone"><svg class="ico" viewBox="0 0 24 24"><path d="M12 2l8 16-8 3-8-3z" fill="#f39a1c" stroke="#630"/><path d="M12 2v19l8-3z" fill="#b85f0a" stroke="none"/></svg></button>
<button class="fly" aria-label="Cage"><svg class="ico" viewBox="0 0 24 24"><path d="M6 6q6 2 12 0-2 6 0 12-6-2-12 0 2-6 0-12" stroke="#555"/><path d="M3 3h5v5H3zM16 3h5v5h-5zM3 16h5v5H3zM16 16h5v5h-5z" fill="#ee3" stroke="#885"/></svg></button>
<button class="fly" aria-label="Box"><svg class="ico" viewBox="0 0 24 24"><path d="M6 5l5-3 8 2v15l-7 3-6-3z" fill="#455" stroke="#122"/><path d="M12 7v15l3-1V6zM17 5v15l2-1V4z" fill="#9bb" stroke="#122"/></svg></button>
</div>

<div class="d-flex flex-grow-1 mt-1">
<div class="flex-grow-1 d-flex flex-column">
<div class="d-flex flex-grow-1">
<div class="box">
<button aria-label="Select"><svg class="ico" viewBox="0 0 24 24"><path d="M8 4v14l3-3 3 6 2-1-3-6h5z" fill="#fff"/></svg></button>
<button class="fly" aria-label="Point"><svg class="ico" viewBox="0 0 24 24"><circle cx="12" cy="12" r="2" fill="#fff"/></svg></button>
<button class="fly" aria-label="Polyline"><svg class="ico" viewBox="0 0 24 24"><path d="M4 20l5-14 10 10"/><path d="M3 18h3v3H3zM8 5h2v2H8zM18 15h3v3h-3z" fill="#fff"/></svg></button>
<button class="fly" aria-label="Curve"><svg class="ico" viewBox="0 0 24 24"><path d="M5 6h10q5 5 3 13H5" stroke="#777"/><path d="M2 5h3v3H2zM17 3h3v3h-3zM2 17h3v3H2zM18 18h3v3h-3z" fill="#fff"/></svg></button>
<button class="fly" aria-label="Circle"><svg class="ico" viewBox="0 0 24 24"><circle cx="12" cy="12" r="9" stroke="#555"/><path d="M12 12l6-6"/><path d="M10 11h3v3h-3zM17 4h3v3h-3z" fill="#fff"/></svg></button>
<button class="fly" aria-label="Ellipse"><svg class="ico" viewBox="0 0 24 24"><ellipse cx="12" cy="12" rx="9" ry="7" stroke="#555"/><path d="M12 12h8M12 5v7"/><path d="M10 10h3v3h-3zM10 3h3v3h-3zM19 10h3v3h-3z" fill="#fff"/></svg></button>
<button class="fly" aria-label="Arc"><svg class="ico" viewBox="0 0 24 24"><path d="M5 4q12 1 15 8L5 20z"/><path d="M4 3h2v2H4zM19 11h3v3h-3zM3 19h3v3H3z" fill="#fff"/></svg></button>
<button class="fly" aria-label="Rectangle"><svg class="ico" viewBox="0 0 24 24"><path d="M3 7h17v11H3z"/><path d="M19 5h3v3h-3zM2 17h3v3H2z" fill="#fff"/></svg></button>
<button class="fly" aria-label="Polygon"><svg class="ico" viewBox="0 0 24 24"><path d="M8 5h8l4 7-4 7H8l-5-7z" stroke="#555"/><path d="M11 12h9"/><path d="M9 10h3v3H9zM18 10h3v3h-3z" fill="#fff"/></svg></button>
<button class="fly" aria-label="Fillet"><svg class="ico" viewBox="0 0 24 24"><path d="M3 5q16-1 16 15" stroke-width="2"/><path d="M2 3h3v3H2zM17 19h4v3h-4z" fill="#fff"/></svg></button>
<button class="fly" aria-label="Surface"><svg class="ico" viewBox="0 0 24 24"><path d="M7 5h13l-3 12-13 3z" fill="#7b93e6"/><path d="M12 5l-2 14M5 12h13" stroke="#346"/><path d="M5 3h4v4H5zM18 3h4v4h-4zM2 16h4v4H2zM14 18h4v4h-4z" fill="#fff"/></svg></button>
<button class="fly" aria-label="Loft"><svg class="ico" viewBox="0 0 24 24"><path d="M3 4q16 0 18 12l-6 6Q14 11 3 9z" fill="#fff"/><path d="M9 5q9 3 12 11l-6 1q-2-6-8-8z" fill="#7b93e6"/></svg></button>
<button class="fly" aria-label="Box"><svg class="ico" viewBox="0 0 24 24"><path d="M4 8l8-5 8 4v9l-8 6-8-3z" fill="#7b93e6"/><path d="M4 8l9 2v12M13 10l7-3"/></svg></button>
<button class="fly" aria-label="Spheres"><svg class="ico" viewBox="0 0 24 24"><circle cx="15" cy="8" r="6.500" fill="#7b93e6"/><circle cx="8" cy="15" r="6.500" fill="#7b93e6"/><path d="M2 15h13M9 8h13M8 9v12" stroke="#346"/></svg></button>
<button class="fly" aria-label="Cylinder cut"><svg class="ico" viewBox="0 0 24 24"><ellipse cx="12" cy="4" rx="5" ry="2.500" stroke="#777"/><path d="M2 11q10 4 20 0v9q-10 4-20 0z" fill="#7b93e6"/><ellipse cx="12" cy="17" rx="6" ry="3" fill="#fff"/></svg></button>
<button class="fly" aria-label="Patch"><svg class="ico" viewBox="0 0 24 24"><path d="M9 3l12 3-5 15-13-4z" fill="#8fa4ea"/><path d="M6 10l13 3M14 4l-5 15M3 17L21 6" stroke="#346"/></svg></button>
<button aria-label="Join"><svg class="ico" viewBox="0 0 24 24"><path d="M3 7l4-1V3h4l1 3 4-1 1 4-3 1 1 4-4 1-2-2-4 1 1-4z" fill="#f5a21c" stroke="#843"/><path d="M9 14l4-1 2-3 3 2-1 2 5 1-1 3-3 1v3l-4 1-1-3-4 1z" fill="#fff" stroke="#555"/></svg></button>
<button aria-label="Explode"><svg class="ico" viewBox="0 0 24 24"><path d="M2 22L1 6l7 9 5-12v12l10-9-6 11 5 2-9 3z" fill="#f8a020" stroke="#843"/></svg></button>
<button aria-label="Trim"><svg class="ico" viewBox="0 0 24 24"><path d="M1 12h12v5H1zM14 12l8 5-4 5-7-5z" fill="#fff" stroke="#555"/><path d="M12 3h6l-5 12z" fill="#248" stroke="#124"/></svg></button>
<button aria-label="Split"><svg class="ico" viewBox="0 0 24 24"><path d="M3 12h18v5H3z" fill="#fff"/><path d="M11 3h6l-4 12z" fill="#248" stroke="#124"/></svg></button>
<button class="fly" aria-label="Group"><svg class="ico" viewBox="0 0 24 24"><circle cx="12" cy="8" r="4.500" fill="#99d" stroke-width="2"/><circle cx="8" cy="15" r="4.500" fill="#fff" stroke-width="2"/><circle cx="16" cy="15" r="4.500" fill="#226"/></svg></button>
<button aria-label="Ungroup"><svg class="ico" viewBox="0 0 24 24"><circle cx="12" cy="7" r="3.500" fill="#aae" stroke="#669"/><circle cx="7" cy="16" r="3.500" fill="#fff"/><circle cx="17" cy="16" r="3.500" fill="#226"/></svg></button>
<button aria-label="Edit points"><svg class="ico" viewBox="0 0 24 24"><path d="M3 6q15 1 15 15" stroke-width="2"/><circle cx="7" cy="7" r="2" fill="#fff"/><circle cx="17" cy="16" r="2" fill="#fff"/></svg></button>
<button class="fly" aria-label="Control points"><svg class="ico" viewBox="0 0 24 24"><path d="M2 6q15 1 16 15" stroke-width="2"/><path d="M2 2h8M12 2h7v10" stroke-dasharray="2 1"/><path d="M8 1h3v3H8zM19 12h3v3h-3z" fill="#fff"/></svg></button>
<button aria-label="Text"><svg class="ico" viewBox="0 0 24 24"><path d="M4 3h15v5h-2l-2-2v13l2 1v2H8v-2l2-1V6L6 8H4z" fill="#5472d8" stroke="#124"/></svg></button>
<button class="fly" aria-label="Move"><svg class="ico" viewBox="0 0 24 24"><path d="M3 15h6v6H3z" fill="#fff"/><path d="M15 3h6v6h-6z" fill="#8fa4ea"/><path d="M9 14l5-5M11 9h3v3" stroke-width="1.500"/></svg></button>
<button aria-label="Array"><svg class="ico" viewBox="0 0 24 24"><path d="M3 3h6v6H3zM15 5h6v6h-6zM11 9h6v6h-6zM14 16h7v6h-7z" fill="#8fa4ea"/><path d="M3 15h6v6H3z" fill="#fff"/></svg></button>
<button class="fw-bold" aria-label="More">»</button>
</div>
<div class="view flex-grow-1">
<div class="lbl">Perspective <span class="border-start border-dark ms-1 ps-1">▾</span></div>
<svg viewBox="0 0 405 366" preserveAspectRatio="xMidYMid slice">
<path id="ground" fill="#979aa3" stroke="none"/>
<path id="mesh" stroke="#848791" stroke-width=".5"/>
<path d="M149 217L179 100" stroke="#3a9c3a" stroke-width="1.500"/><path d="M149 217L316 239" stroke="#a04448" stroke-width="1.500"/>
<g stroke="#960a10" stroke-width="4.500"><ellipse cx="126" cy="183" rx="42" ry="33"/><ellipse cx="251" cy="183" rx="42" ry="33"/><ellipse cx="199" cy="285" rx="47" ry="41"/></g>
<path d="M124 180h5v5h-5zM248 180h5v5h-5zM196 282h5v5h-5z" fill="#a01018" stroke="none"/>
<path d="M34 314v18l28 4" stroke="#4a4c54"/>
<g fill="#4a4c54" stroke="none" font-size="13"><text x="38" y="315" font-style="italic">y</text><text x="63" y="338">x</text></g>
</svg></div>
</div>
<div class="vtabs d-flex"><button class="on">Perspective</button><button>Top</button><button>Front</button><button>Right</button><button class="plus" aria-label="New viewport"><svg width="9" height="9"><path d="M3 0h3v3h3v3H6v3H3V6H0V3h3z" fill="#eee" stroke="#777"/></svg></button></div>
</div>
<aside class="panel d-flex flex-column mt-1 mb-1">
<div class="ptabs">
<button aria-label="Materials"><svg width="16" height="16"><circle cx="8" cy="8" r="5" stroke="#3b6ad0" stroke-width="3"/><path d="M8 3a5 5 0 0 1 5 5" stroke="#3b3" stroke-width="3"/><path d="M3 8a5 5 0 0 1 5-5" stroke="#e44" stroke-width="3"/><path d="M3.500 6A5 5 0 0 0 5 12" stroke="#e4c" stroke-width="3"/></svg></button>
<button class="on" aria-label="Layers"><svg width="18" height="16"><path d="M2 3l6 2 8-3v5l-7 4-7-4z" fill="#e5502a" stroke="#722"/><path d="M2 8l7 4 7-4v3l-7 4-7-4z" fill="#fff" stroke="#225"/></svg></button>
<button aria-label="Display"><svg width="17" height="16"><path d="M2 2h13v10H2z" fill="#99a" stroke="#222" stroke-width="1.500"/><path d="M6 14h6" stroke-width="2"/></svg></button>
<button aria-label="Help"><svg width="17" height="16"><path d="M2 2h13v12H2z" fill="#dde6fa" stroke="#347"/><path d="M2 3h13" stroke="#347" stroke-width="2"/><path d="M5 13v-2a4 4 0 0 1 8 0v2h-3v-2H8v2z" fill="#36c" stroke="none"/></svg></button>
<button class="gear" aria-label="Options"><svg width="14" height="16"><circle cx="7" cy="9" r="5" stroke="#888" stroke-width="2" stroke-dasharray="2 2"/><circle cx="7" cy="9" r="3.500" stroke="#888"/></svg></button></div>
<div class="ptools">
<button aria-label="New layer"><svg width="16" height="16"><path d="M4 2h6l3 3v9H4z" fill="#fff"/></svg></button>
<button aria-label="New sublayer"><svg width="16" height="16"><path d="M3 1h6v10H3zM7 5h4l3 3v6H7z" fill="#fff"/></svg></button>
<button aria-label="Delete"><svg width="16" height="16"><path d="M3 3l10 10M13 3L3 13" stroke-width="2.500"/></svg></button>
<button aria-label="Up"><svg width="16" height="16"><path d="M2 11l6-6 6 6z" fill="#777" stroke="#444"/></svg></button>
<button aria-label="Down"><svg width="16" height="16"><path d="M2 5h12l-6 6z" fill="#bbb" stroke="#999"/></svg></button>
<button aria-label="Left"><svg width="16" height="16"><path d="M11 2v12L5 8z" fill="#bbb" stroke="#aaa"/></svg></button>
<button aria-label="Filter"><svg width="16" height="16"><path d="M2 2h12l-4 6v6H7V8z" fill="#666" stroke="#444"/></svg></button>
<button aria-label="Tools"><svg width="14" height="16"><path d="M2 2h8l3 3v9H2zM2 8h11M7 5v9M2 11h11" fill="#ccc" stroke="#888"/></svg></button></div>
<div class="players d-flex flex-column justify-content-between">
<table><thead><tr><th>Name</th><th></th></tr></thead><tbody><tr><td>Default</td><td></td></tr><tr><td>Layer 01</td><td></td></tr><tr><td>Layer 02</td><td></td></tr><tr><td>Layer 03</td><td></td></tr><tr><td>Layer 04</td><td></td></tr><tr><td>Layer 05</td><td></td></tr><tr class="sel"><td>Point</td><td><svg width="11" height="12" class="ms-auto"><path d="M1 6l3 4 6-7" stroke="#111" stroke-width="2"/></svg></td></tr></tbody></table>
<div class="sb-h d-flex align-items-center"><svg width="10" height="14" class="ms-1"><path d="M5 4L2 7l3 3" stroke-width="2"/></svg><i></i><svg width="10" height="14" class="ms-auto"><path d="M3 4l3 3-3 3" stroke-width="2"/></svg></div>
</div></aside>
</div>

<div class="snaps grip"><label><input type="checkbox" checked>End</label><label><input type="checkbox" checked>Near</label><label><input type="checkbox" checked>Point</label><label><input type="checkbox" checked>Mid</label><label><input type="checkbox" checked>Cen</label><label><input type="checkbox" checked>Int</label><label><input type="checkbox" checked>Perp</label><label><input type="checkbox" checked>Tan</label><label><input type="checkbox" checked>Quad</label><label><input type="checkbox" checked>Knot</label><label><input type="checkbox" checked>Vertex</label><label><input type="checkbox">Project</label><label><input type="checkbox">Disable</label></div>
<footer class="rstat"><button>CPlai</button><span>x -144.3</span><span class="ps-1">y 57.32</span><span class="ps-2">z 0.00</span><span>Millimete</span><button><span class="swatch"></span>Point</button><button>Grid Sr</button><button>Orth</button><button class="act">Plan</button><button class="act">Osna</button><button class="act">SmartTi</button><button class="act">Gumb</button><button>Record His</button><button>Fil</button><span></span></footer>
</section>
</main>
<script src="https://cdn.jsdelivr.net/npm/bootstrap@5.3.0/dist/js/bootstrap.bundle.min.js"></script>
<script>
// Construction plane: project a 50 x 50 unit grid onto its four corners.
(function () {
  var p0 = [38, 82], p1 = [327, 115], p2 = [302, 400], p3 = [-75, 344], n = 50;
  var sx = p0[0] - p1[0] + p2[0] - p3[0], sy = p0[1] - p1[1] + p2[1] - p3[1];
  var dx1 = p1[0] - p2[0], dx2 = p3[0] - p2[0], dy1 = p1[1] - p2[1], dy2 = p3[1] - p2[1];
  var det = dx1 * dy2 - dx2 * dy1;
  var g = (sx * dy2 - dx2 * sy) / det, h = (dx1 * sy - sx * dy1) / det;
  var a = p1[0] - p0[0] + g * p1[0], b = p3[0] - p0[0] + h * p3[0];
  var d = p1[1] - p0[1] + g * p1[1], e = p3[1] - p0[1] + h * p3[1];
  function at(u, v) {
    var w = g * u + h * v + 1;
    return ((a * u + b * v + p0[0]) / w).toFixed(1) + ' ' + ((d * u + e * v + p0[1]) / w).toFixed(1);
  }
  var path = '';
  for (var i = 0; i <= n; i++) {
    path += 'M' + at(i / n, 0) + 'L' + at(i / n, 1) + 'M' + at(0, i / n) + 'L' + at(1, i / n);
  }
  document.getElementById('mesh').setAttribute('d', path);
  document.getElementById('ground').setAttribute('d', 'M' + at(0, 0) + 'L' + at(1, 0) + 'L' + at(1, 1) + 'L' + at(0, 1) + 'Z');
})();
</script>
</body>
</html>
